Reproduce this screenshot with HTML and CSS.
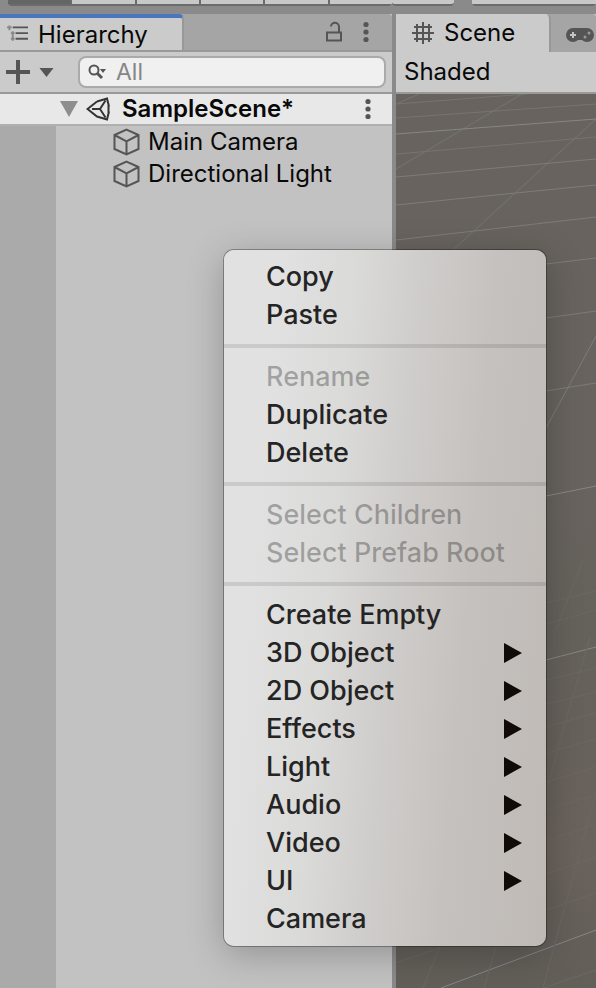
FILE: index.html
```html
<!DOCTYPE html>
<html lang="en">
<head>
<meta charset="utf-8">
<meta name="viewport" content="width=device-width, initial-scale=1">
<title>Hierarchy</title>
<link rel="stylesheet" href="styles.css">
</head>
<body>
<svg class="defs" aria-hidden="true">
  <symbol id="cube" viewBox="0 0 28 28"><path d="M14 1.6 26 7v14L14 26.4 2 21V7zM2 7l12 6.4L26 7M14 13.4v13"/></symbol>
  <symbol id="dots" viewBox="0 0 6 22"><circle cx="3" cy="3.5" r="2.6"/><circle cx="3" cy="11" r="2.6"/><circle cx="3" cy="18.5" r="2.6"/></symbol>
</svg>
<div class="app">
  <header class="strip">
    <div class="tools"><span class="tool on"></span><span class="tool"></span><span class="tool"></span><span class="tool"></span><span class="tool"></span><span class="tool"></span></div>
    <div class="tools single"><span class="tool"></span></div>
    <div class="tools rest"><span class="tool"></span></div>
  </header>
  <main class="panels">
    <section class="panel hierarchy">
      <div class="tabs">
        <div class="tab active">
          <svg class="list-icon" viewBox="0 0 22 20" aria-hidden="true"><path d="M6 2h16M9 8h13M9 14h13"/><path class="marks" d="M0 2h5M2.500 0v5M4 8h4M4 14h4M6 6v10"/></svg>
          <span>Hierarchy</span>
        </div>
        <div class="tab-tools">
          <button aria-label="Lock"><svg class="lock" viewBox="0 0 18 22"><path d="M2 11.500h14v8H2zM14 11V6a4 4 0 0 0-8-.5"/></svg></button>
          <button aria-label="Panel menu"><svg class="dots"><use href="#dots"/></svg></button>
        </div>
      </div>
      <div class="toolbar">
        <button class="add" aria-label="Create">
          <svg class="plus" viewBox="0 0 24 24"><path d="M12 0v24M0 12h24"/></svg>
          <svg class="caret" viewBox="0 0 14 9"><path d="M0 0h14L7 9z"/></svg>
        </button>
        <label class="search">
          <svg viewBox="0 0 20 16" aria-hidden="true"><circle cx="6" cy="6" r="4.500"/><path class="handle" d="m9 9 5 5"/><path class="drop" d="M12 5h6l-3 4z"/></svg>
          <input type="text" placeholder="All" aria-label="Search hierarchy">
        </label>
      </div>
      <div class="scene-row">
        <svg class="fold" viewBox="0 0 18 16" aria-hidden="true"><path d="M0 0h18L9 16z"/></svg>
        <svg class="unity" viewBox="0 0 24 24" aria-hidden="true"><path d="M11 4.500 21 1.500l2 8M11 4.500 1.500 12l9.500 7.500 10 3 2-8M6 12h8l5.500-8.500M14 12l5.500 8.500M22.500 8v8"/></svg>
        <strong>SampleScene*</strong>
        <button class="scene-menu" aria-label="Scene menu"><svg class="dots"><use href="#dots"/></svg></button>
      </div>
      <ul class="tree">
        <li><svg class="cube" aria-hidden="true"><use href="#cube"/></svg>Main Camera</li>
        <li><svg class="cube" aria-hidden="true"><use href="#cube"/></svg>Directional Light</li>
      </ul>
    </section>
    <section class="panel scene">
      <div class="tabs">
        <div class="tab active scene-tab">
          <svg class="grid-icon" viewBox="0 0 22 22" aria-hidden="true"><path d="M5 2v18M11 0v22M17 2v18M2 5h18M0 11h22M2 17h18"/></svg>
          <span>Scene</span>
        </div>
        <div class="tab game-tab">
          <svg class="pad" viewBox="0 0 28 14" aria-hidden="true"><path class="body" d="M7 0h14a7 7 0 0 1 0 14q-3 0-5-2h-4q-2 2-5 2A7 7 0 0 1 7 0z"/><path class="cross" d="M4 7h6M7 4v6"/><circle cx="19" cy="9" r="1.500"/><circle cx="23" cy="5" r="1.500"/></svg>
        </div>
      </div>
      <div class="toolbar shading">Shaded</div>
      <svg class="view" viewBox="396 94 200 894" preserveAspectRatio="xMinYMin slice" aria-hidden="true">
        <path class="dim" d="M396 104 527 94M396 118l200-14M396 154l200-17M396 104l23-10M396 169 522 94M453 250 596 119"/>
        <path class="line" d="M396 177l200-18M396 205l200-20M396 240l200-23M546 264l50-6M546 318l50-7M546 391l50-8M546 428l50-92"/>
        <path class="bright" d="M396 134l200-15M546 496l50-10M546 660l50-13M441 988l155-58"/>
        <path class="faint" d="M546 910l50-17M546 874l50-17M546 841l50-17M546 810l50-15M546 782l50-15M546 753l50-14M546 727l50-14M546 704l50-12M546 680l50-12M546 603l50-12M546 624l50-14M548 785l20-72 22-76M596 792l-53 196M423 988l17-41M484 988l12-41M396 963l44-15M543 988l53-18M556 630l27-70"/>
      </svg>
    </section>
  </main>
  <div class="menu" role="menu">
    <button role="menuitem">Copy</button>
    <button role="menuitem">Paste</button>
    <hr>
    <button role="menuitem" disabled>Rename</button>
    <button role="menuitem">Duplicate</button>
    <button role="menuitem">Delete</button>
    <hr>
    <button role="menuitem" disabled>Select Children</button>
    <button role="menuitem" disabled>Select Prefab Root</button>
    <hr>
    <button role="menuitem">Create Empty</button>
    <button role="menuitem" class="sub">3D Object</button>
    <button role="menuitem" class="sub">2D Object</button>
    <button role="menuitem" class="sub">Effects</button>
    <button role="menuitem" class="sub">Light</button>
    <button role="menuitem" class="sub">Audio</button>
    <button role="menuitem" class="sub">Video</button>
    <button role="menuitem" class="sub">UI</button>
    <button role="menuitem">Camera</button>
  </div>
</div>
</body>
</html>
```
FILE: styles.css
```css
* { box-sizing: border-box; }
body {
  margin: 0;
  font-family: Inter, "Liberation Sans", sans-serif;
  font-size: 24px;
  line-height: 32px;
  color: #090909;
  background: #8a8a8a;
}
button {
  display: flex;
  align-items: center;
  border: 0;
  padding: 0;
  background: none;
  font: inherit;
  color: inherit;
}
svg { display: block; flex: none; fill: none; stroke: #555; stroke-width: 2; }
.defs { position: absolute; width: 0; height: 0; }
.app {
  position: relative;
  display: flex;
  flex-direction: column;
  gap: 8px;
  min-height: 100vh;
  overflow: hidden;
}

/* Lower edge of the main toolbar */
.strip { display: flex; height: 6px; padding-left: 8px; }
.tools {
  display: flex;
  gap: 2px;
  width: 384px;
  background: #6b6b6b;
  border-bottom: 2px solid #6b6b6b;
  border-radius: 0 0 4px 4px;
}
.tool { flex: 1; background: #c8c8c8; }
.tool.on { background: #656565; }
.single { width: 62px; overflow: hidden; }
.rest { flex: 1; margin-left: 18px; }

.panels { flex: 1; display: grid; grid-template-columns: 392px minmax(0, 1fr); gap: 4px; }
.panel { display: flex; flex-direction: column; min-width: 0; background: #c2c2c2; }

.tabs { display: flex; height: 38px; background: #a5a5a5; border-radius: 0 4px 0 0; overflow: hidden; }
.tab { display: flex; align-items: center; }
.active { background: #cbcbcb; border-right: 2px solid #989898; border-radius: 0 5px 0 0; }
.hierarchy .active {
  width: 184px;
  gap: 10px;
  padding-left: 7px;
  border-top: 4px solid #4976be;
}
.hierarchy .tabs { border-bottom: 2px solid #999; }
.hierarchy .active { height: 38px; }
.list-icon { width: 21px; height: 20px; }
.list-icon .marks { stroke: #888; }
.tab-tools { display: flex; align-items: center; gap: 20px; margin-left: auto; padding-right: 23px; }
.lock { width: 18px; height: 22px; }
.dots { width: 6px; height: 22px; fill: #555; stroke: none; }
.scene-tab { width: 155px; gap: 10px; padding-left: 16px; }
.grid-icon { width: 22px; height: 22px; }
.game-tab { padding: 4px 0 0 15px; }
.pad { width: 28px; height: 14px; stroke: none; fill: #999; }
.pad .body { fill: #555; }
.pad .cross { stroke: #c4c4c4; }

.toolbar {
  display: flex;
  align-items: center;
  gap: 24px;
  height: 42px;
  padding: 0 6px;
  background: #cbcbcb;
  border-bottom: 2px solid #999;
}
.add { gap: 9px; }
.plus { width: 24px; height: 24px; stroke-width: 4; }
.caret { width: 15px; height: 9px; fill: #555; stroke: none; }
.search {
  flex: 1;
  display: flex;
  align-items: center;
  gap: 8px;
  height: 32px;
  min-width: 0;
  padding: 0 8px;
  background: #f0f0f0;
  border: 2px solid #aaa;
  border-radius: 8px;
}
.search svg { width: 20px; height: 16px; }
.search .handle { stroke-width: 3; }
.search .drop { fill: #555; stroke: none; }
.search input {
  flex: 1;
  min-width: 0;
  border: 0;
  padding: 0;
  outline: 0;
  background: none;
  font: inherit;
  font-size: 23px;
  line-height: 28px;
}
.search input::placeholder { color: #858585; opacity: 1; }
.shading { padding: 0 8px; }

.scene-row {
  display: flex;
  align-items: center;
  height: 32px;
  padding: 0 21px 2px 60px;
  background: #e8e8e8;
  box-shadow: inset 0 -2px #b0b0b0;
}
.fold { width: 18px; height: 16px; fill: #8e8e8e; stroke: none; }
.unity { width: 24px; height: 24px; margin: 0 12px 0 8px; stroke: #333; }
.scene-row strong { font-weight: 600; }
.scene-menu { margin-left: auto; }

.tree {
  flex: 1;
  margin: 0;
  padding: 0 0 0 112px;
  list-style: none;
  background: linear-gradient(90deg, #aaa 56px, #c2c2c2 56px);
}
.tree li { display: flex; align-items: center; gap: 7px; height: 32px; padding-bottom: 1px; }
.cube { width: 29px; height: 28px; }

.view { flex: 1; width: 100%; min-height: 0; height: 0; background: linear-gradient(#68635e 45%, #65615b 60%, #6a625d 85%, #625e58); stroke-width: 1; }
.dim { stroke: #76756f; }
.line { stroke: #7b7d7c; }
.bright { stroke: #848788; }
.faint { stroke: #6c6863; }

/* Context menu */
.menu {
  position: absolute;
  top: 250px;
  left: 224px;
  width: 322px;
  padding: 8px 0;
  border-radius: 10px;
  font-size: 27px;
  font-weight: 450;
  line-height: 38px;
  color: #242424;
  background: linear-gradient(95deg, #e1e1e1 15%, #dadad9 35%, #cfcdcb 52%, #c5c1be 72%, #bfbab6);
  box-shadow: 0 0 0 1px rgba(0, 0, 0, .3), 0 8px 36px rgba(0, 0, 0, .25);
}
.menu button { width: 100%; height: 38px; padding: 0 24px 0 42px; text-align: left; white-space: nowrap; }
.menu button:disabled { color: rgba(0, 0, 0, .28); }
.menu hr { height: 4px; margin: 10px 0; border: 0; background: rgba(0, 0, 0, .1); }
.sub::after {
  content: "";
  width: 18px;
  height: 20px;
  margin-left: auto;
  background: #110b07;
  clip-path: polygon(0 0, 100% 50%, 0 100%);
}
```
